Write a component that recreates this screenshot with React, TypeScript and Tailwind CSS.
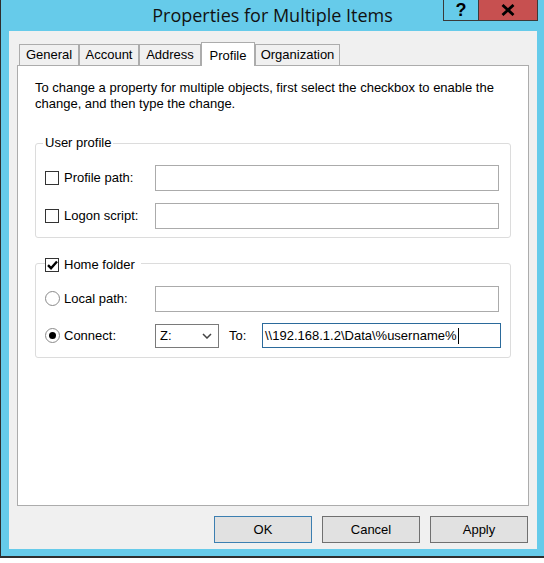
import React from "react";

const tabs = [
  { label: "General", w: "w-[60px]" },
  { label: "Account", w: "w-[60px]" },
  { label: "Address", w: "w-[62px]" },
  { label: "Profile", w: "w-[54px]", active: true },
  { label: "Organization", w: "w-[85px]" },
];

function CheckBox({ checked }: { checked?: boolean }) {
  return (
    <span className="grid h-[14px] w-[14px] shrink-0 place-items-center border border-[#333333] bg-white">
      {checked && (
        <svg width="11" height="10" viewBox="0 0 11 10">
          <path d="M1 5.2 L4 8.2 L10 1.5" fill="none" stroke="#000" strokeWidth="2.4" />
        </svg>
      )}
    </span>
  );
}

function Radio({ checked }: { checked?: boolean }) {
  return (
    <span className="grid h-[15px] w-[15px] shrink-0 place-items-center rounded-full border border-[#8a8a8a] bg-white">
      {checked && <span className="h-[7px] w-[7px] rounded-full bg-black" />}
    </span>
  );
}

function TextBox({ className = "" }: { className?: string }) {
  return <div className={"h-[26px] w-[344px] border border-[#ababab] bg-white " + className} />;
}

export default function App() {
  return (
    <div className="h-[563px] w-[544px] bg-white text-[13px] text-black" style={{ fontFamily: '"Liberation Sans", Arial, sans-serif' }}>
      <div className="flex h-[558px] w-[544px] flex-col border-b-2 border-l border-[#2e2e2e] bg-[#66cbea]">
        {/* title bar */}
        <div className="relative flex h-[31px] items-center justify-center">
          <span className="text-[18px] text-[#111]" style={{ fontFamily: '"Open Sans", sans-serif' }}>
            Properties for Multiple Items
          </span>
          <div className="absolute right-[6px] top-0 flex h-[21px] border-x border-b border-[#3a3a3a]">
            <div className="flex w-[35px] items-center justify-center border-r border-[#3a3a3a] text-[18px] font-bold leading-none">?</div>
            <div className="flex w-[58px] items-center justify-center bg-[#c75050]">
              <svg width="14" height="12" viewBox="0 0 14 12">
                <path d="M1.5 1 L12.5 11 M12.5 1 L1.5 11" stroke="#000" strokeWidth="2.8" />
              </svg>
            </div>
          </div>
        </div>

        {/* client */}
        <div className="ml-[8px] mr-[7px] flex h-[518px] flex-col bg-[#f0f0f0] px-[8px] pt-[11px]">
          <div className="relative z-10 ml-[2px] flex h-[23px] items-end">
            {tabs.map((t) =>
              t.active ? (
                <div key={t.label} className={`-mb-px flex h-[24px] items-start justify-center border-x border-t border-[#acacac] bg-white pt-[3px] ${t.w}`}>
                  {t.label}
                </div>
              ) : (
                <div key={t.label} className={`flex h-[21px] items-center justify-center border-x border-t border-[#acacac] bg-[#f0f0f0] ${t.w}`}>
                  {t.label}
                </div>
              )
            )}
          </div>

          <div className="h-[441px] w-[512px] border border-[#acacac] bg-white px-[17px] pt-[14px]">
            <p className="leading-[16px]">
              To change a property for multiple objects, first select the checkbox to enable the change, and then type the change.
            </p>

            {/* User profile */}
            <div className="relative mt-[31px] h-[95px] w-[476px] rounded-[3px] border border-[#dcdcdc] pl-[9px] pt-[21px]">
              <span className="absolute -top-[9px] left-[7px] bg-white px-[2px] leading-[16px]">User profile</span>
              <div className="flex h-[26px] items-center">
                <div className="flex w-[110px] items-center gap-[5px]">
                  <CheckBox />
                  <span>Profile path:</span>
                </div>
                <TextBox />
              </div>
              <div className="mt-[12px] flex h-[26px] items-center">
                <div className="flex w-[110px] items-center gap-[5px]">
                  <CheckBox />
                  <span>Logon script:</span>
                </div>
                <TextBox />
              </div>
            </div>

            {/* Home folder */}
            <div className="relative mt-[25px] h-[95px] w-[476px] rounded-[3px] border border-[#dcdcdc] pl-[9px] pt-[22px]">
              <div className="absolute -top-[7px] left-[9px] flex items-center gap-[5px] bg-white pr-[6px] leading-[16px]">
                <CheckBox checked />
                <span>Home folder</span>
              </div>
              <div className="flex h-[25px] items-center">
                <div className="flex w-[110px] items-center gap-[4px]">
                  <Radio />
                  <span>Local path:</span>
                </div>
                <TextBox className="h-[25px]" />
              </div>
              <div className="mt-[12px] flex h-[25px] items-center">
                <div className="flex w-[110px] items-center gap-[4px]">
                  <Radio checked />
                  <span>Connect:</span>
                </div>
                <div className="flex h-[24px] w-[64px] items-center justify-between border border-[#7a7a7a] bg-white pl-[4px] pr-[6px]">
                  <span>Z:</span>
                  <svg width="10" height="6" viewBox="0 0 10 6">
                    <path d="M1 1 L5 5 L9 1" fill="none" stroke="#444" strokeWidth="1.5" />
                  </svg>
                </div>
                <span className="ml-[10px] w-[33px]">To:</span>
                <div className="flex h-[25px] w-[239px] items-center border border-[#2b6a9b] bg-white pl-[2px]">
                  <span>\\192.168.1.2\Data\%username%</span>
                  <span className="ml-px h-[16px] w-px bg-black" />
                </div>
              </div>
            </div>
          </div>

          <div className="mt-[10px] flex justify-end gap-[10px] pr-[1px]">
            <button className="h-[27px] w-[98px] border border-[#3c7fb1] bg-[#e1e1e1]">OK</button>
            <button className="h-[27px] w-[98px] border border-[#707070] bg-[#e1e1e1]">Cancel</button>
            <button className="h-[27px] w-[98px] border border-[#707070] bg-[#e1e1e1]">Apply</button>
          </div>
        </div>
      </div>
    </div>
  );
}
